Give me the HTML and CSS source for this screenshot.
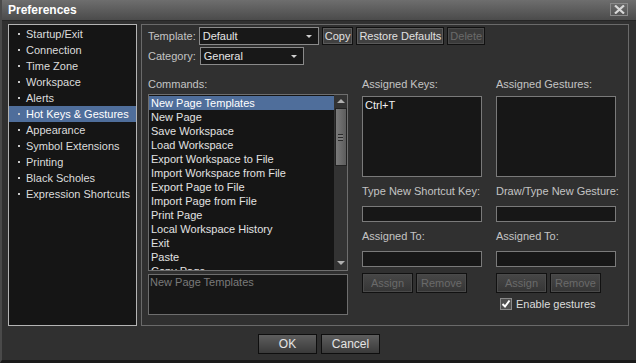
FILE: index.html
```html
<!DOCTYPE html>
<html lang="en">
<head>
    <meta charset="UTF-8"/>
    <title>Preferences</title>
    <link rel="stylesheet" href="styles.css">
</head>
<body>
<div class="window">
    <!-- title bar -->
    <div class="titlebar">
        <span class="title">Preferences</span>
        <span class="close">
            <svg width="11" height="9" viewBox="0 0 11 9"><path d="M1 0.5 L10 8.5 M10 0.5 L1 8.5" stroke="#d8d8d8" stroke-width="2.2"/></svg>
        </span>
    </div>

    <div class="body">
        <!-- left navigation -->
        <ul class="nav">
            <li>Startup/Exit</li>
            <li>Connection</li>
            <li>Time Zone</li>
            <li>Workspace</li>
            <li>Alerts</li>
            <li class="active">Hot Keys &amp; Gestures</li>
            <li>Appearance</li>
            <li>Symbol Extensions</li>
            <li>Printing</li>
            <li>Black Scholes</li>
            <li>Expression Shortcuts</li>
        </ul>

        <!-- main panel -->
        <div class="panel">
            <div class="row">
                <span class="label">Template:</span>
                <div class="select template">Default<span class="caret"></span></div>
                <button class="btn">Copy</button>
                <button class="btn">Restore Defaults</button>
                <button class="btn disabled">Delete</button>
            </div>
            <div class="row">
                <span class="label">Category:</span>
                <div class="select category">General<span class="caret"></span></div>
            </div>

            <div class="columns">
                <div class="col commands">
                    <div class="label head">Commands:</div>
                    <div class="list">
                        <ul class="items">
                            <li class="selected">New Page Templates</li>
                            <li>New Page</li>
                            <li>Save Workspace</li>
                            <li>Load Workspace</li>
                            <li>Export Workspace to File</li>
                            <li>Import Workspace from File</li>
                            <li>Export Page to File</li>
                            <li>Import Page from File</li>
                            <li>Print Page</li>
                            <li>Local Workspace History</li>
                            <li>Exit</li>
                            <li>Paste</li>
                            <li>Copy Page</li>
                        </ul>
                        <div class="scrollbar">
                            <span class="arrow up"></span>
                            <div class="thumb"><span class="grip"></span></div>
                            <span class="arrow down"></span>
                        </div>
                    </div>
                    <div class="desc">New Page Templates</div>
                </div>

                <div class="col">
                    <div class="label head">Assigned Keys:</div>
                    <div class="box"><span class="key">Ctrl+T</span></div>
                    <div class="label sub">Type New Shortcut Key:</div>
                    <div class="input"></div>
                    <div class="label sub">Assigned To:</div>
                    <div class="input"></div>
                    <div class="buttons">
                        <button class="btn small disabled">Assign</button>
                        <button class="btn small disabled">Remove</button>
                    </div>
                </div>

                <div class="col">
                    <div class="label head">Assigned Gestures:</div>
                    <div class="box"></div>
                    <div class="label sub">Draw/Type New Gesture:</div>
                    <div class="input"></div>
                    <div class="label sub">Assigned To:</div>
                    <div class="input"></div>
                    <div class="buttons">
                        <button class="btn small disabled">Assign</button>
                        <button class="btn small disabled">Remove</button>
                    </div>
                    <label class="check">
                        <span class="checkbox">
                            <svg width="10" height="10" viewBox="0 0 10 10"><path d="M1.5 5 L4 7.5 L8.5 1.5" fill="none" stroke="#ffffff" stroke-width="2"/></svg>
                        </span>
                        Enable gestures
                    </label>
                </div>
            </div>
        </div>
    </div>

    <!-- bottom buttons -->
    <div class="footer">
        <button class="btn big">OK</button>
        <button class="btn big">Cancel</button>
    </div>
</div>
</body>
</html>
```

FILE: styles.css
```css
body {
    margin: 0;
    font-family: "Liberation Sans", Tahoma, sans-serif;
    font-size: 11px;
    background-color: #2f2f2f;
}

.window {
    width: 636px;
    height: 363px;
    box-sizing: border-box;
    display: flex;
    flex-direction: column;
    background-color: #303030;
    border-left: 2px solid #4a4a4a;
    border-bottom: 3px solid #1a1a1a;
}

.titlebar {
    height: 21px;
    box-sizing: border-box;
    display: flex;
    align-items: center;
    justify-content: space-between;
    padding: 0 8px 1px 6px;
    background: linear-gradient(#6e6e6e, #4b4b4b);
    border-bottom: 1px solid #262626;
}

.title {
    color: #ffffff;
    font-weight: bold;
    font-size: 12px;
}

.close {
    width: 16px;
    height: 11px;
    display: flex;
    align-items: center;
    justify-content: center;
    border: 1px solid #8a8a8a;
    background: linear-gradient(#6a6a6a, #555555);
}

.body {
    display: flex;
    gap: 4px;
    padding: 3px 0 0 6px;
    height: 302px;
}

.nav {
    list-style: none;
    margin: 0;
    padding: 1px 0 0 0;
    width: 129px;
    box-sizing: border-box;
    height: 302px;
    border: 1px solid #b4b4b4;
    background-color: #151515;
}

.nav li {
    height: 16px;
    line-height: 16px;
    padding-left: 17px;
    color: #dcdcdc;
    position: relative;
}

.nav li::before {
    content: "";
    position: absolute;
    left: 9px;
    top: 7px;
    width: 2px;
    height: 2px;
    background-color: #c8c8c8;
}

.nav li.active {
    background-color: #4f6e9b;
    color: #ffffff;
}

.panel {
    width: 488px;
    height: 302px;
    box-sizing: border-box;
    border: 1px solid #6a6a6a;
    padding: 1px 0 0 6px;
}

.row {
    display: flex;
    align-items: center;
    gap: 3px;
    height: 19px;
    margin-bottom: 1px;
}

.label {
    color: #c4c4c4;
    white-space: nowrap;
}

.select {
    height: 18px;
    box-sizing: border-box;
    border: 1px solid #8a8a8a;
    background-color: #181818;
    color: #e6e6e6;
    padding-left: 3px;
    line-height: 16px;
    position: relative;
}

.select.template {
    width: 120px;
    margin-left: 0;
}

.select.category {
    width: 104px;
    margin-left: 1px;
}

.caret {
    position: absolute;
    right: 6px;
    top: 7px;
    border-left: 3px solid transparent;
    border-right: 3px solid transparent;
    border-top: 3px solid #d0d0d0;
}

.btn {
    font-family: inherit;
    font-size: 11px;
    height: 18px;
    padding: 0 2px;
    color: #e0e0e0;
    background: #404040;
    border: 1px solid #111111;
    box-shadow: inset 0 0 0 1px #5a5a5a;
    white-space: nowrap;
}

.btn.disabled {
    color: #6a6a6a;
    background: #3a3a3a;
    box-shadow: inset 0 0 0 1px #4a4a4a;
}

.columns {
    display: flex;
    gap: 14px;
    margin-top: 11px;
}

.col {
    width: 120px;
    display: flex;
    flex-direction: column;
}

.col.commands {
    width: 200px;
}

.head {
    height: 16px;
    line-height: 16px;
    margin-bottom: 4px;
}

.commands .head {
    margin-bottom: 2px;
}

.list {
    height: 177px;
    box-sizing: border-box;
    border: 1px solid #6e6e6e;
    background-color: #151515;
    display: flex;
    overflow: hidden;
}

.items {
    list-style: none;
    margin: 0;
    padding: 1px 0 0 0;
    flex: 1;
}

.items li {
    height: 14px;
    line-height: 14px;
    padding-left: 2px;
    color: #e2e2e2;
    white-space: nowrap;
}

.items li.selected {
    background-color: #4f6e9b;
    color: #ffffff;
}

.scrollbar {
    width: 13px;
    background-color: #333333;
    display: flex;
    flex-direction: column;
    align-items: center;
    padding-top: 4px;
    box-sizing: border-box;
}

.arrow {
    width: 0;
    height: 0;
    border-left: 4px solid transparent;
    border-right: 4px solid transparent;
}

.arrow.up {
    border-bottom: 4px solid #b0b0b0;
}

.arrow.down {
    border-top: 4px solid #b0b0b0;
    margin-top: auto;
    margin-bottom: 5px;
}

.thumb {
    width: 12px;
    height: 58px;
    box-sizing: border-box;
    margin-top: 5px;
    border: 1px solid #222222;
    background: linear-gradient(to right, #7a7a7a, #5c5c5c);
    display: flex;
    align-items: center;
    justify-content: center;
}

.grip {
    width: 5px;
    height: 5px;
    border-top: 1px solid #2a2a2a;
    border-bottom: 1px solid #2a2a2a;
    background: linear-gradient(#7a7a7a 40%, #2a2a2a 40%, #2a2a2a 60%, #7a7a7a 60%);
}

.desc {
    margin-top: 3px;
    height: 41px;
    box-sizing: border-box;
    border: 1px solid #6e6e6e;
    background-color: #171717;
    color: #7a7a7a;
    padding: 1px 0 0 1px;
}

.box {
    height: 81px;
    box-sizing: border-box;
    border: 1px solid #7a7a7a;
    background-color: #171717;
    padding: 2px 0 0 2px;
}

.key {
    color: #f0f0f0;
}

.sub {
    height: 16px;
    line-height: 16px;
    margin-top: 6px;
}

.input {
    height: 16px;
    box-sizing: border-box;
    margin-top: 7px;
    border: 1px solid #7a7a7a;
    background-color: #171717;
}

.buttons {
    display: flex;
    gap: 3px;
    margin-top: 6px;
}

.btn.small {
    width: 51px;
    height: 20px;
    background: linear-gradient(#474747, #353535);
}

.check {
    display: flex;
    align-items: center;
    gap: 4px;
    margin: 5px 0 0 4px;
    color: #dcdcdc;
    white-space: nowrap;
}

.checkbox {
    width: 12px;
    height: 12px;
    box-sizing: border-box;
    border: 1px solid #8a8a8a;
    background-color: #505050;
    display: flex;
    align-items: center;
    justify-content: center;
}

.footer {
    flex: 1;
    display: flex;
    justify-content: center;
    align-items: center;
    gap: 4px;
    padding-top: 2px;
}

.btn.big {
    width: 59px;
    height: 20px;
    font-size: 12px;
    color: #e4e4e4;
    background: linear-gradient(#5e5e5e, #3a3a3a);
    border: 1px solid #0e0e0e;
    box-shadow: none;
}
```
